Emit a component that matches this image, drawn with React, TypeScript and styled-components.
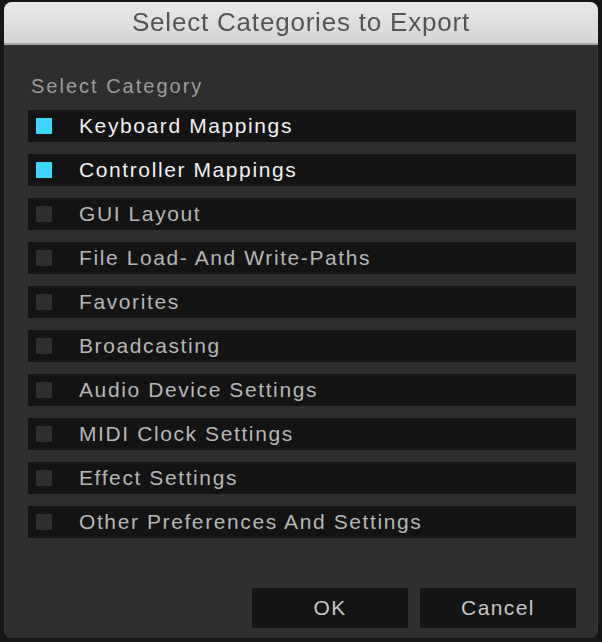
import React, { useState } from 'react';
import styled, { createGlobalStyle } from 'styled-components';

const categories = [
  'Keyboard Mappings',
  'Controller Mappings',
  'GUI Layout',
  'File Load- And Write-Paths',
  'Favorites',
  'Broadcasting',
  'Audio Device Settings',
  'MIDI Clock Settings',
  'Effect Settings',
  'Other Preferences And Settings',
];

function App() {
  const [checked, setChecked] = useState<boolean[]>(
    categories.map((_, i) => i < 2)
  );

  const toggle = (i: number) =>
    setChecked((prev) => prev.map((v, j) => (j === i ? !v : v)));

  return (
    <>
      <GlobalStyle />
      <Screen>
        <Dialog>
          <TitleBar>Select Categories to Export</TitleBar>
          <Body>
            <Label>Select Category</Label>
            <List>
              {categories.map((name, i) => (
                <Row key={name} onClick={() => toggle(i)}>
                  <Check $on={checked[i]} />
                  <RowText $on={checked[i]}>{name}</RowText>
                </Row>
              ))}
            </List>
            <Footer>
              <Button>OK</Button>
              <Button>Cancel</Button>
            </Footer>
          </Body>
        </Dialog>
      </Screen>
    </>
  );
}

export default App;

const GlobalStyle = createGlobalStyle`
  html, body {
    margin: 0;
    padding: 0;
    background: #141414;
  }
  body {
    font-family: "Liberation Sans", Arial, sans-serif;
  }
`;

const Screen = styled.div`
  width: 602px;
  height: 642px;
  padding: 2px 4px 4px 4px;
  box-sizing: border-box;
  background: #161616;
`;

const Dialog = styled.div`
  height: 636px;
  display: flex;
  flex-direction: column;
  border-radius: 8px;
  overflow: hidden;
  background: #2e2e2e;
  box-shadow: inset 1px 0 0 #383838, inset -1px 0 0 #383838;
`;

const TitleBar = styled.div`
  height: 41px;
  flex-shrink: 0;
  display: flex;
  align-items: center;
  justify-content: center;
  background: linear-gradient(#e9e9e9, #d5d5d5);
  border-bottom: 2px solid #a9a9a9;
  color: #555555;
  font-size: 26px;
  letter-spacing: 0.8px;
  filter: blur(0.3px);
`;

const Body = styled.div`
  flex: 1;
  display: flex;
  flex-direction: column;
  padding: 28px 22px 10px 24px;
`;

const Label = styled.div`
  font-size: 20px;
  line-height: 26px;
  letter-spacing: 2px;
  color: #9c9c9c;
  margin-left: 3px;
`;

const List = styled.div`
  display: flex;
  flex-direction: column;
  gap: 12px;
  margin-top: 11px;
`;

const Row = styled.div`
  height: 32px;
  display: flex;
  align-items: center;
  padding-left: 8px;
  background: #141414;
  cursor: pointer;
`;

const Check = styled.span<{ $on: boolean }>`
  width: 16px;
  height: 16px;
  flex-shrink: 0;
  background: ${(p) => (p.$on ? '#3dd6ff' : '#2e2e2e')};
`;

const RowText = styled.span<{ $on: boolean }>`
  margin-left: 27px;
  font-size: 21px;
  letter-spacing: 1.6px;
  color: ${(p) => (p.$on ? '#f0f0f0' : '#b6b6b6')};
`;

const Footer = styled.div`
  margin-top: auto;
  display: flex;
  justify-content: flex-end;
  gap: 12px;
`;

const Button = styled.button`
  width: 156px;
  height: 40px;
  border: none;
  background: #141414;
  color: #c6c6c6;
  font-family: "Liberation Sans", Arial, sans-serif;
  font-size: 21px;
  letter-spacing: 1.4px;
  cursor: pointer;
`;
